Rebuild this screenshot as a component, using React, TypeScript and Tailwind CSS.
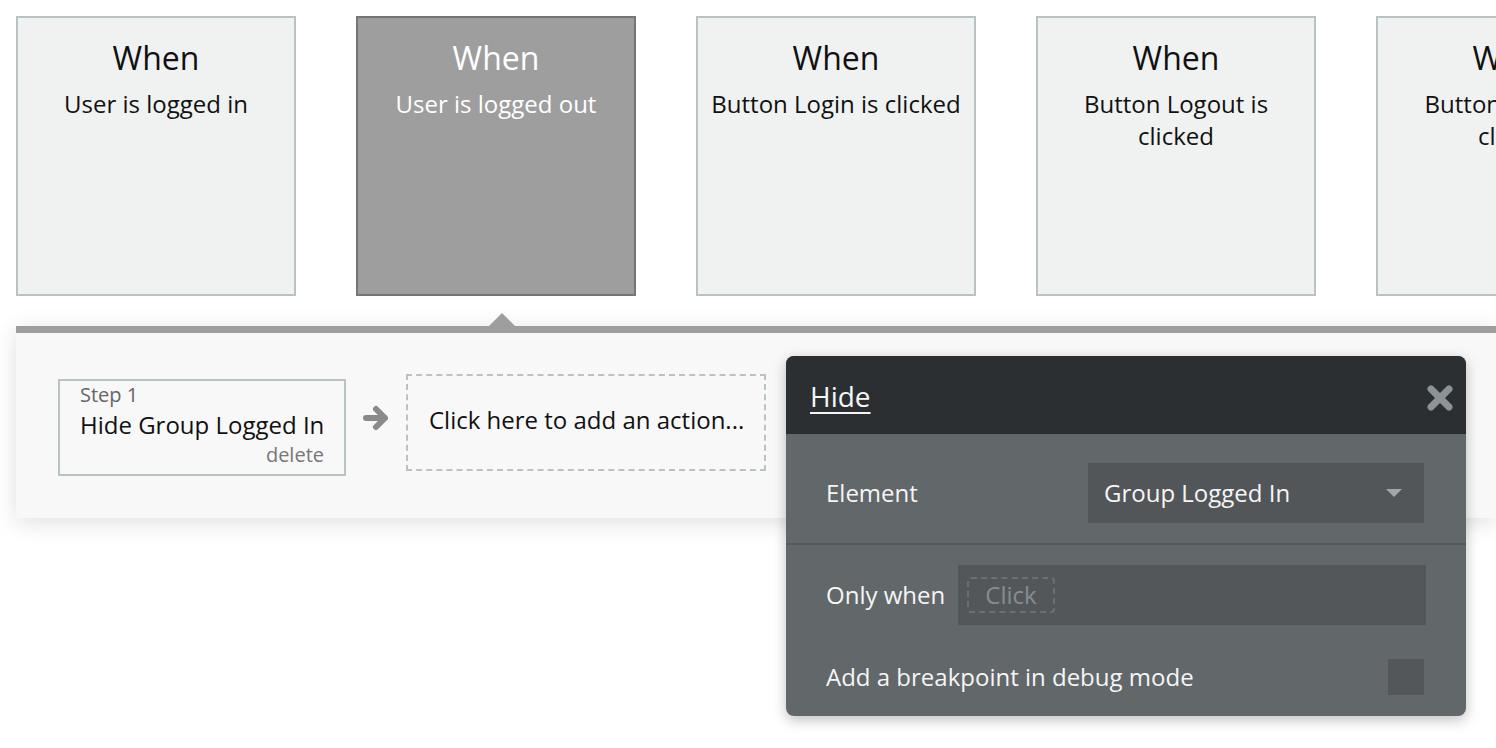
const events = [
  { title: 'When', sub: 'User is logged in', active: false },
  { title: 'When', sub: 'User is logged out', active: true },
  { title: 'When', sub: 'Button Login is clicked', active: false },
  { title: 'When', sub: 'Button Logout is clicked', active: false },
  { title: 'When', sub: 'Button Signup is clicked', active: false },
]

function EventCard({ title, sub, active }: { title: string; sub: string; active: boolean }) {
  return (
    <div
      className={
        active
          ? 'w-[280px] h-[280px] shrink-0 border-2 border-[#757575] bg-[#9e9e9e] text-white flex flex-col items-center px-[8px] pt-[20px]'
          : 'w-[280px] h-[280px] shrink-0 border-2 border-[#b9c3c5] bg-[#f0f2f1] text-[#111] flex flex-col items-center px-[8px] pt-[20px]'
      }
    >
      <div className="text-[32px] leading-[40px]">{title}</div>
      <div className="text-[24px] leading-[32px] text-center mt-[10px]">{sub}</div>
    </div>
  )
}

export default function App() {
  return (
    <div
      className="relative w-[1496px] h-[748px] overflow-hidden bg-white"
      style={{ fontFamily: '"Open Sans", "Liberation Sans", sans-serif' }}
    >
      {/* event cards */}
      <div className="flex gap-[60px] pl-4 pt-4">
        {events.map((e, i) => (
          <EventCard key={i} {...e} />
        ))}
      </div>

      {/* workflow panel */}
      <div className="relative ml-4 mt-[30px] border-t-[7px] border-[#9e9e9e] bg-[#f8f8f8] h-[192px] shadow-[0_4px_22px_rgba(0,0,0,0.13)]">
        <div className="absolute left-[473px] -top-[20px] w-0 h-0 border-l-[13px] border-r-[13px] border-b-[13px] border-l-transparent border-r-transparent border-b-[#9e9e9e]" />
        <div className="flex items-start pl-[42px]">
          <div className="mt-[46px] w-[288px] h-[97px] border-2 border-[#b9c3c5] flex flex-col justify-center pl-5 pr-5 pb-[6px] whitespace-nowrap">
            <div className="text-[20px] leading-[30px] text-[#666]">Step 1</div>
            <div className="text-[24px] leading-[30px] text-[#111]">Hide Group Logged In</div>
            <div className="text-[20px] leading-[30px] text-[#777] text-right">delete</div>
          </div>
          <div className="mt-[70px] w-[60px] flex justify-center">
            <svg width="28" height="30" viewBox="0 0 28 30" fill="none" stroke="#8a8a8a" strokeWidth="6" strokeLinecap="round" strokeLinejoin="round">
              <path d="M4 15 H22" />
              <path d="M14 6 L23 15 L14 24" />
            </svg>
          </div>
          <div className="mt-[41px] w-[360px] h-[97px] border-2 border-dashed border-[#b9c3c5] flex items-center pl-[21px] pb-[6px] text-[24px] text-[#111] whitespace-nowrap">
            Click here to add an action...
          </div>
        </div>
      </div>

      {/* action editor popover */}
      <div className="absolute left-[786px] top-[356px] w-[680px] h-[360px] rounded-[8px] overflow-hidden bg-[#62676a] shadow-[0_4px_14px_rgba(0,0,0,0.25)] text-[#f5f5f5]">
        <div className="h-[78px] bg-[#2b2f32] flex items-center justify-between pl-6 pr-[13px] pt-[2px]">
          <span className="text-[28px] leading-[36px] underline underline-offset-[5px] decoration-[2px]">Hide</span>
          <svg width="26" height="26" viewBox="0 0 26 26" fill="none" stroke="#8b9396" strokeWidth="7" strokeLinecap="round" className="mt-[4px]">
            <path d="M4 4 L22 22" />
            <path d="M22 4 L4 22" />
          </svg>
        </div>
        <div className="h-[111px] flex items-center justify-between pl-10 pr-[42px] pt-[8px] border-b-2 border-[#55595c]">
          <span className="text-[24px]">Element</span>
          <div className="w-[336px] h-[60px] bg-[#535659] flex items-center justify-between pl-4 pr-[22px]">
            <span className="text-[24px]">Group Logged In</span>
            <div className="w-0 h-0 border-l-[8px] border-r-[8px] border-t-[8px] border-l-transparent border-r-transparent border-t-[#a2a6a8]" />
          </div>
        </div>
        <div className="flex items-center pl-10 pr-10 pt-[20px]">
          <span className="w-[132px] text-[24px]">Only when</span>
          <div className="w-[468px] h-[60px] bg-[#53575a] flex items-center pl-[9px]">
            <div className="h-[36px] w-[88px] border-2 border-dashed border-[#6b6f72] rounded-[4px] flex items-center justify-center text-[24px] text-[#888c8f]">
              Click
            </div>
          </div>
        </div>
        <div className="flex items-center justify-between pl-10 pr-[42px] pt-[34px]">
          <span className="text-[24px]">Add a breakpoint in debug mode</span>
          <div className="w-[36px] h-[36px] bg-[#53575a]" />
        </div>
      </div>
    </div>
  )
}
